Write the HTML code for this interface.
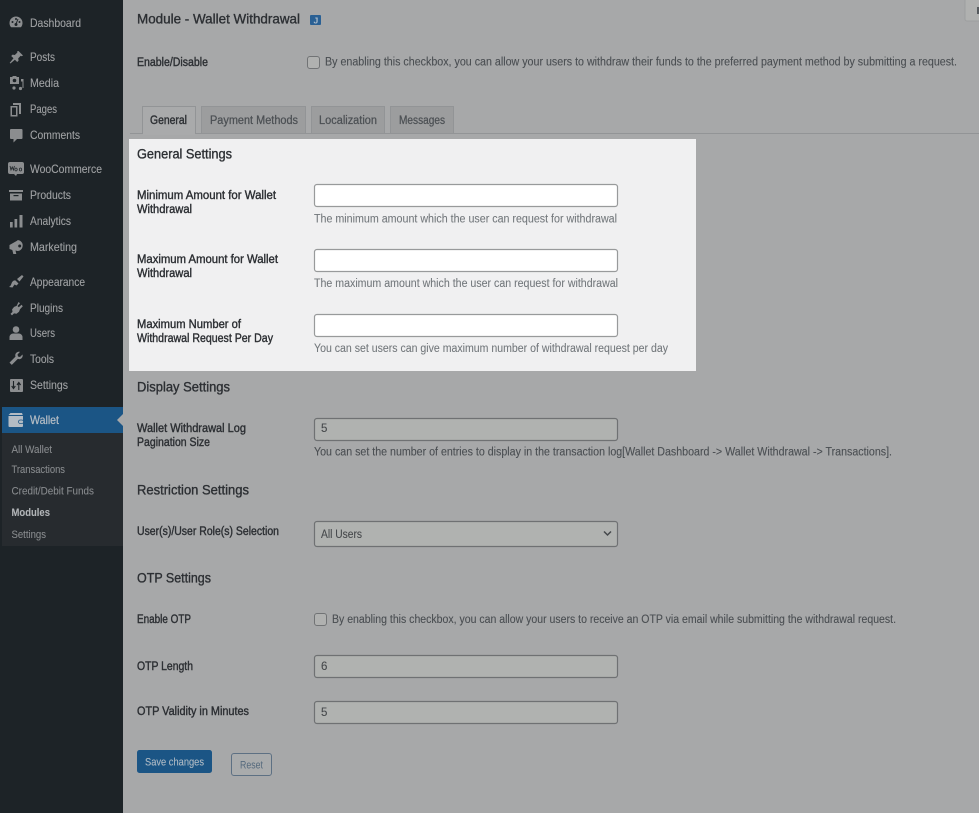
<!DOCTYPE html>
<html lang="en"><head><meta charset="utf-8"><title>Module - Wallet Withdrawal</title>
<style>
html,body{margin:0;padding:0;width:979px;height:813px;overflow:hidden;background:#a7a8a9}
svg{display:block;position:absolute;left:0;top:0;filter:blur(.35px)}
text{font-family:"Liberation Sans",sans-serif;white-space:pre}
.m text{font-size:12px;fill:#a0a2a4;stroke:#a0a2a4;stroke-width:.1px}
.s text{font-size:11px;fill:#888b8e;stroke:#888b8e;stroke-width:.08px}
.l text{font-size:11.5px;fill:#2c2f33;stroke:#2c2f33;stroke-width:.38px}
.h text{font-size:13.5px;fill:#2c2f33;stroke:#2c2f33;stroke-width:.35px}
.d text{font-size:11.5px;fill:#4a4e52;stroke:#4a4e52;stroke-width:.1px}
.dw text{font-size:11.5px;fill:#73787c;stroke:#73787c;stroke-width:.08px}
.t text{font-size:11.5px;fill:#4c5054;stroke:#4c5054;stroke-width:.25px}
.v text{font-size:11.5px;fill:#45484b;stroke:#45484b;stroke-width:.1px}
.i{fill:#8b8d8f}
.f{fill:#b0b2b0;stroke:#6f7173;stroke-width:1.2}
.w{fill:#fff;stroke:#989a9b;stroke-width:1.2}
</style></head><body>
<svg width="979" height="813" viewBox="0 0 979 813" xmlns="http://www.w3.org/2000/svg">
<rect width="979" height="813" fill="#a7a8a9"/>
<rect width="123" height="813" fill="#1d2327"/>
<rect x="2" y="433" width="121" height="113" fill="#272b2f"/>
<rect x="2" y="407" width="121" height="26" fill="#1b5585"/>
<path d="M123 414l-6 6 6 6z" fill="#a7a8a9"/>

<g>
<!-- dashboard -->
<path class="i" d="M16 16.500a6.500 6.500 0 0 0-6.500 6.500c0 1.700.6 3.300 1.700 4.300h9.600c1.100-1 1.700-2.600 1.700-4.300a6.500 6.500 0 0 0-6.500-6.500z"/>
<circle cx="16" cy="24.500" r="1.500" fill="#1d2327"/><path d="M16 24l2-5" stroke="#1d2327" stroke-width="1"/>
<circle cx="12.500" cy="22" r="1" fill="#1d2327"/><circle cx="19.500" cy="22" r="1" fill="#1d2327"/><circle cx="16" cy="19" r="1" fill="#1d2327"/>
<!-- posts -->
<path class="i" d="M18.500 51l4.500 4.500-1.300.7-1-.4-2.500 2.600.4 2.200-1.400 1.400-2.300-2.300-4.500 3.800-.7-.6 3.800-4.600-2.300-2.300 1.400-1.400 2.200.4 2.600-2.500-.4-1z"/>
<!-- media -->
<path class="i" d="M10 77h2l1-1h3l1 1h2v7h-9zM21 79h2.500v9h-1v-6.500h-1.500z"/><circle cx="14.500" cy="80.500" r="1.800" fill="#1d2327"/><circle cx="14" cy="88" r="1.600" class="i"/><circle cx="20.500" cy="88.500" r="1.600" class="i"/>
<!-- pages -->
<path class="i" d="M13 103h8v11h-2v-9h-6zM10.500 106h7v10.500h-7z"/><rect x="12" y="107.500" width="4" height="7.500" fill="#1d2327"/>
<!-- comments -->
<path class="i" d="M11 129h10.500a1 1 0 0 1 1 1v8a1 1 0 0 1-1 1h-4.500l-3.500 3.500v-3.500h-2.500a1 1 0 0 1-1-1v-8a1 1 0 0 1 1-1z"/>
<!-- woo -->
<rect x="8" y="162" width="16" height="12" rx="2" fill="#8b8d8f"/><path d="M14 174l2 2 1-2z" class="i"/>
<path d="M10 166l1 4 1.200-3 1.200 3 1-4M16 168a1.200 1.500 0 1 0 .01 0M20.500 168a1.200 1.500 0 1 0 .01 0" fill="none" stroke="#1d2327" stroke-width=".8"/>
<!-- products -->
<path class="i" d="M9 190h14v2h-14zM10 193.500h12v7h-12z"/><rect x="13.500" y="195" width="5" height="1.200" fill="#1d2327"/>
<!-- analytics -->
<path class="i" d="M10 222h2.700v5.500h-2.700zM14.500 219h2.700v8.500h-2.700zM19.500 215h3v12.500h-3z"/>
<!-- marketing -->
<path class="i" d="M9.500 245l8-4.500v-.5a5.500 5.500 0 0 1 5 7 5 5 0 0 1-5 4l-2-.5.8 3.500h-3l-1-4-2.800-1z"/><circle cx="19.700" cy="246" r="1.500" fill="#1d2327"/>
<!-- appearance -->
<path class="i" d="M22 275l1.500 1.500-4 5-2.500-2.500zM15.500 280.500l3 3-2 2-2-1-2 3-3.500-.5c1.500-1 2-2 2.500-3.500s2-3.500 4-3z"/>
<!-- plugins -->
<path class="i" d="M18.500 302l1.500 1.300-2.500 2.700 1.300 1.300 2.700-2.500 1.300 1.500-2.800 3-1 2.500-2.500 2-2.500-.4-2 2-1.500-1.500 2-2-.4-2.500 2-2.500 2.500-1z"/>
<!-- users -->
<circle cx="16" cy="329.500" r="3.300" class="i"/><path class="i" d="M9.500 340v-3c0-2 2-3.500 3.500-3.500h6c1.500 0 3.500 1.500 3.500 3.500v3z"/>
<!-- tools -->
<path class="i" d="M22.500 354.500c.7 2-.6 4.500-3 4.700-.6 0-1.200 0-1.700-.3l-6 6-2.300-2.300 6-6c-.3-.6-.3-1.200-.2-1.800.3-2.200 2.700-3.600 4.700-2.900l-2.500 2.600.5 2 2 .5z"/>
<!-- settings -->
<rect x="10" y="379" width="13" height="13" rx="1" fill="#8b8d8f"/>
<path d="M13.500 381v7M11.700 386l1.800 2.500 1.800-2.500M18.800 390v-7M17 385l1.800-2.500 1.800 2.500" fill="none" stroke="#1d2327" stroke-width="1.100"/>
<!-- wallet -->
<path d="M9 414.500l1.500-1.500h11.500l.6 1.500z" fill="#b4bcc4"/><rect x="8.500" y="414.500" width="14.500" height="12.500" rx="1" fill="#b4bcc4"/>
<rect x="8.500" y="415" width="14.500" height="1" fill="#1b5585"/>
<rect x="18.500" y="420" width="5" height="3.500" rx="1.700" fill="#b4bcc4" stroke="#1b5585" stroke-width=".8"/>
</g>

<g class="m">
<text x="30" y="27" textLength="51" lengthAdjust="spacingAndGlyphs">Dashboard</text>
<text x="30" y="61" textLength="25" lengthAdjust="spacingAndGlyphs">Posts</text>
<text x="30" y="87" textLength="29" lengthAdjust="spacingAndGlyphs">Media</text>
<text x="30" y="113" textLength="27" lengthAdjust="spacingAndGlyphs">Pages</text>
<text x="30" y="139" textLength="50" lengthAdjust="spacingAndGlyphs">Comments</text>
<text x="30" y="173" textLength="72" lengthAdjust="spacingAndGlyphs">WooCommerce</text>
<text x="30" y="199" textLength="41" lengthAdjust="spacingAndGlyphs">Products</text>
<text x="30" y="225" textLength="41" lengthAdjust="spacingAndGlyphs">Analytics</text>
<text x="30" y="251" textLength="47" lengthAdjust="spacingAndGlyphs">Marketing</text>
<text x="30" y="286" textLength="55" lengthAdjust="spacingAndGlyphs">Appearance</text>
<text x="30" y="312" textLength="33" lengthAdjust="spacingAndGlyphs">Plugins</text>
<text x="30" y="337" textLength="25" lengthAdjust="spacingAndGlyphs">Users</text>
<text x="30" y="363" textLength="24" lengthAdjust="spacingAndGlyphs">Tools</text>
<text x="30" y="389" textLength="38" lengthAdjust="spacingAndGlyphs">Settings</text>
<text x="30" y="424" textLength="29" lengthAdjust="spacingAndGlyphs" style="fill:#b4bcc4;stroke:#b4bcc4;stroke-width:.25px">Wallet</text>
</g>
<g class="s">
<text x="11.500" y="453" textLength="40.500" lengthAdjust="spacingAndGlyphs">All Wallet</text>
<text x="11.500" y="473" textLength="53.500" lengthAdjust="spacingAndGlyphs">Transactions</text>
<text x="11.500" y="494.500" textLength="82.500" lengthAdjust="spacingAndGlyphs">Credit/Debit Funds</text>
<text x="11.500" y="516" textLength="38.500" lengthAdjust="spacingAndGlyphs" style="fill:#b2b5b8;stroke:#b2b5b8;font-weight:bold">Modules</text>
<text x="11.500" y="538" textLength="34.500" lengthAdjust="spacingAndGlyphs">Settings</text>
</g>

<!-- corner button -->
<rect x="965" y="-4" width="20" height="25" rx="2" fill="#b0b1b0" stroke="#9d9e9f"/>
<rect x="977" y="7" width="2" height="7" fill="#55595d"/>

<!-- title -->
<g class="h"><text x="137" y="23.500" textLength="163" lengthAdjust="spacingAndGlyphs">Module - Wallet Withdrawal</text></g>
<rect x="310" y="15" width="11" height="10" rx="1" fill="#2a6094"/>
<text x="313.500" y="23.500" fill="#aebdcc" style="font-size:8.500px;font-weight:bold">J</text>

<g class="l"><text x="137" y="66" textLength="71" lengthAdjust="spacingAndGlyphs">Enable/Disable</text></g>
<rect x="307.500" y="56.500" width="12" height="12" rx="2.500" fill="#b0b1b0" stroke="#717375"/>
<g class="d"><text x="325" y="65.500" textLength="632" lengthAdjust="spacingAndGlyphs">By enabling this checkbox, you can allow your users to withdraw their funds to the preferred payment method by submitting a request.</text></g>

<!-- tabs -->
<path d="M130 133.500H979" stroke="#929496" stroke-width="1"/>
<path d="M142.500 134v-27.500h53V134" fill="#a9aaab" stroke="#929496"/>
<rect x="143" y="132" width="52" height="3" fill="#a9aaab"/>
<rect x="201.500" y="106.500" width="104" height="27" fill="#9c9d9e" stroke="#929496"/>
<rect x="311.500" y="106.500" width="73" height="27" fill="#9c9d9e" stroke="#929496"/>
<rect x="390.500" y="106.500" width="63" height="27" fill="#9c9d9e" stroke="#929496"/>
<g class="t">
<text x="150" y="124" textLength="37" lengthAdjust="spacingAndGlyphs" style="fill:#2c2f33;stroke:#2c2f33;stroke-width:.38px">General</text>
<text x="210" y="124" textLength="88" lengthAdjust="spacingAndGlyphs">Payment Methods</text>
<text x="319" y="124" textLength="58" lengthAdjust="spacingAndGlyphs">Localization</text>
<text x="399" y="124" textLength="46" lengthAdjust="spacingAndGlyphs">Messages</text>
</g>

<!-- highlighted panel -->
<rect x="129" y="139" width="567" height="232" fill="#f0f0f1"/>

<g class="h">
<text x="137" y="158.500" textLength="95" lengthAdjust="spacingAndGlyphs">General Settings</text>
<text x="137" y="391.500" textLength="93" lengthAdjust="spacingAndGlyphs">Display Settings</text>
<text x="137" y="494.500" textLength="112" lengthAdjust="spacingAndGlyphs">Restriction Settings</text>
<text x="137" y="582.500" textLength="74" lengthAdjust="spacingAndGlyphs">OTP Settings</text>
</g>
<g class="l">
<text x="137" y="199" textLength="139" lengthAdjust="spacingAndGlyphs">Minimum Amount for Wallet</text>
<text x="137" y="213" textLength="55" lengthAdjust="spacingAndGlyphs">Withdrawal</text>
<text x="137" y="263" textLength="141" lengthAdjust="spacingAndGlyphs">Maximum Amount for Wallet</text>
<text x="137" y="277" textLength="55" lengthAdjust="spacingAndGlyphs">Withdrawal</text>
<text x="137" y="328" textLength="104" lengthAdjust="spacingAndGlyphs">Maximum Number of</text>
<text x="137" y="342" textLength="136" lengthAdjust="spacingAndGlyphs">Withdrawal Request Per Day</text>
<text x="137" y="432" textLength="109" lengthAdjust="spacingAndGlyphs">Wallet Withdrawal Log</text>
<text x="137" y="446" textLength="73" lengthAdjust="spacingAndGlyphs">Pagination Size</text>
<text x="137" y="535" textLength="142" lengthAdjust="spacingAndGlyphs">User(s)/User Role(s) Selection</text>
<text x="137" y="623" textLength="54" lengthAdjust="spacingAndGlyphs">Enable OTP</text>
<text x="137" y="670" textLength="56" lengthAdjust="spacingAndGlyphs">OTP Length</text>
<text x="137" y="715" textLength="112" lengthAdjust="spacingAndGlyphs">OTP Validity in Minutes</text>
</g>

<!-- inputs -->
<rect class="w" x="314.500" y="184.500" width="303" height="22" rx="2.500"/>
<rect class="w" x="314.500" y="249.500" width="303" height="22" rx="2.500"/>
<rect class="w" x="314.500" y="314.500" width="303" height="22" rx="2.500"/>
<rect class="f" x="314.500" y="418.500" width="303" height="22" rx="2.500"/>
<rect class="f" x="314.500" y="521.500" width="303" height="25" rx="2.500"/>
<rect class="f" x="314.500" y="655.500" width="303" height="22" rx="2.500"/>
<rect class="f" x="314.500" y="701.500" width="303" height="22" rx="2.500"/>
<path d="M604 531.500l3.500 3.500 3.500-3.500" fill="none" stroke="#45484b" stroke-width="1.500"/>
<rect x="314.500" y="613.500" width="12" height="12" rx="2.500" fill="#b0b1b0" stroke="#717375"/>

<g class="v">
<text x="321" y="432">5</text>
<text x="321" y="538" textLength="41" lengthAdjust="spacingAndGlyphs">All Users</text>
<text x="321" y="670">6</text>
<text x="321" y="716">5</text>
</g>
<g class="dw">
<text x="314" y="222.500" textLength="303" lengthAdjust="spacingAndGlyphs">The minimum amount which the user can request for withdrawal</text>
<text x="314" y="287" textLength="304" lengthAdjust="spacingAndGlyphs">The maximum amount which the user can request for withdrawal</text>
<text x="314" y="352" textLength="354" lengthAdjust="spacingAndGlyphs">You can set users can give maximum number of withdrawal request per day</text>
</g>
<g class="d">
<text x="314" y="455.500" textLength="578" lengthAdjust="spacingAndGlyphs">You can set the number of entries to display in the transaction log[Wallet Dashboard -&gt; Wallet Withdrawal -&gt; Transactions].</text>
<text x="332" y="623" textLength="564" lengthAdjust="spacingAndGlyphs">By enabling this checkbox, you can allow your users to receive an OTP via email while submitting the withdrawal request.</text>
</g>

<!-- buttons -->
<rect x="137" y="750" width="75" height="23" rx="2.500" fill="#1b5585"/>
<text x="145" y="765.500" textLength="59" lengthAdjust="spacingAndGlyphs" style="font-size:11px;fill:#b3bdc6;stroke:#b3bdc6;stroke-width:.1px">Save changes</text>
<rect x="231.500" y="753.500" width="40" height="22" rx="2.500" fill="#a9abac" stroke="#5d7083"/>
<text x="240" y="768.500" textLength="23" lengthAdjust="spacingAndGlyphs" style="font-size:11px;fill:#566a7d">Reset</text>
</svg>
</body></html>
